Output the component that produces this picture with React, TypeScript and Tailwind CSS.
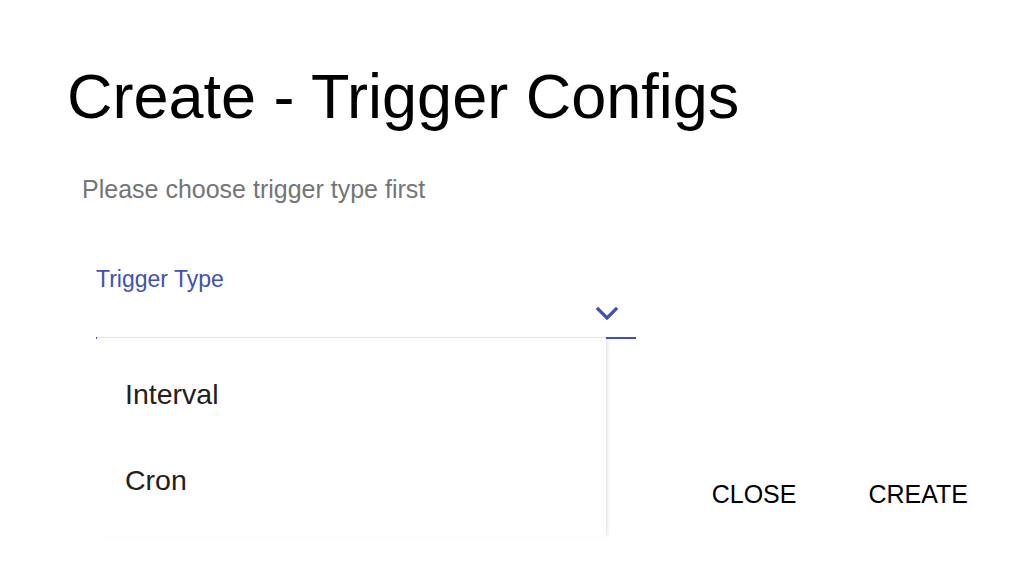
import React from 'react';

const options = ['Interval', 'Cron'];

const Chevron: React.FC = () => (
  <svg width="22" height="14" viewBox="0 0 22 14" fill="none">
    <polyline points="2,2 11,11 20,2" stroke="#3f51b5" strokeWidth="3.2" strokeLinecap="square" />
  </svg>
);

const App: React.FC = () => {
  return (
    <div className="w-[1034px] h-[568px] bg-white overflow-hidden font-['Liberation_Sans',Arial,sans-serif]">
      <h1 className="pl-[67px] pt-[65px] text-[63px] leading-none text-black">Create - Trigger Configs</h1>

      <p className="pl-[82px] mt-[49px] text-[25px] leading-none text-[#757575]">Please choose trigger type first</p>

      <div className="pl-[96px] mt-[66px]">
        <div className="relative w-[540px]">
          <label className="block text-[23px] leading-none text-[#3f51b5]">Trigger Type</label>
          <div className="flex items-center justify-end h-[46px] pr-[18px]">
            <Chevron />
          </div>
          <div className="h-[2px] bg-[#3f51b5]" />

          {/* open select menu, cut off at the bottom of the dialog */}
          <ul className="absolute left-[1px] top-[69px] w-[509px] h-[200px] pt-[13px] bg-white z-10 border-t border-[#e4e4e4] shadow-[3px_0_3px_-1px_rgba(0,0,0,0.09)]">
            {options.map((opt) => (
              <li key={opt} className="flex items-center h-[86px] pl-[28px] text-[28.5px] text-[#212121]">
                {opt}
              </li>
            ))}
          </ul>
        </div>
      </div>

      <div className="flex justify-end gap-[16px] pr-[38px] mt-[123px]">
        <button className="h-[64px] px-[28px] text-[25px] leading-none uppercase text-black">Close</button>
        <button className="h-[64px] px-[28px] text-[25px] leading-none uppercase text-black">Create</button>
      </div>
    </div>
  );
};

export default App;
